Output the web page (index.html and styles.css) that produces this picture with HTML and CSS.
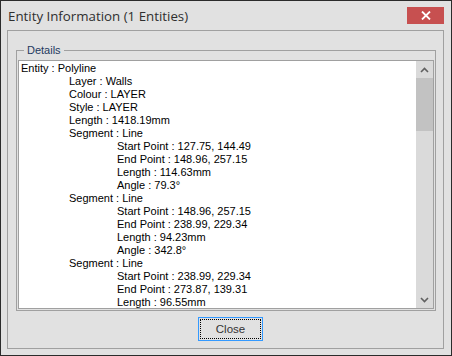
FILE: index.html
```html
<!DOCTYPE html>
<html>
<head>
<meta charset="utf-8">
<link rel="stylesheet" href="styles.css">
</head>
<body>
<div class="window">
  <div class="titlebar">
    <span class="title">Entity Information (1 Entities)</span>
    <span class="close-x">
      <svg width="10" height="9" viewBox="0 0 10 9"><path d="M1 0.5 L9 8.5 M9 0.5 L1 8.5" stroke="#ffffff" stroke-width="1.8" fill="none"/></svg>
    </span>
  </div>
  <div class="panel">
    <div class="group">
      <span class="legend">Details</span>
      <div class="listbox">
        <div class="list">
          <div class="l0">Entity : Polyline</div>
          <div class="l1">Layer : Walls</div>
          <div class="l1">Colour : LAYER</div>
          <div class="l1">Style : LAYER</div>
          <div class="l1">Length : 1418.19mm</div>
          <div class="l1">Segment : Line</div>
          <div class="l2">Start Point : 127.75, 144.49</div>
          <div class="l2">End Point : 148.96, 257.15</div>
          <div class="l2">Length : 114.63mm</div>
          <div class="l2">Angle : 79.3°</div>
          <div class="l1">Segment : Line</div>
          <div class="l2">Start Point : 148.96, 257.15</div>
          <div class="l2">End Point : 238.99, 229.34</div>
          <div class="l2">Length : 94.23mm</div>
          <div class="l2">Angle : 342.8°</div>
          <div class="l1">Segment : Line</div>
          <div class="l2">Start Point : 238.99, 229.34</div>
          <div class="l2">End Point : 273.87, 139.31</div>
          <div class="l2">Length : 96.55mm</div>
        </div>
        <div class="scrollbar">
          <div class="arrow">
            <svg width="9" height="6" viewBox="0 0 9 6"><path d="M1 5 L4.5 1.5 L8 5" stroke="#606060" stroke-width="1.6" fill="none"/></svg>
          </div>
          <div class="thumb"></div>
          <div class="track"></div>
          <div class="arrow">
            <svg width="9" height="6" viewBox="0 0 9 6"><path d="M1 1 L4.5 4.5 L8 1" stroke="#606060" stroke-width="1.6" fill="none"/></svg>
          </div>
        </div>
      </div>
    </div>
    <div class="buttons">
      <button class="btn">Close</button>
    </div>
  </div>
</div>
</body>
</html>
```

FILE: styles.css
```css
html, body {
  margin: 0;
  padding: 0;
  background: #e1e1e1;
}
.window {
  width: 452px;
  height: 356px;
  box-sizing: border-box;
  border: 1px solid #2b2b2b;
  background: #e1e1e1;
  display: flex;
  flex-direction: column;
}
.titlebar {
  height: 29px;
  display: flex;
  align-items: flex-start;
  justify-content: space-between;
}
.title {
  font-family: "Open Sans", "Noto Sans", sans-serif;
  font-size: 13.3px;
  color: #2f2f2f;
  margin-left: 7px;
  margin-top: 6px;
  line-height: 18px;
}
.close-x {
  width: 37px;
  height: 17px;
  margin-top: 6px;
  margin-right: 7px;
  background: #c75050;
  display: flex;
  align-items: center;
  justify-content: center;
}
.panel {
  margin-left: 6px;
  width: 437px;
  height: 319px;
  box-sizing: border-box;
  border: 1px solid #a0a0a0;
  display: flex;
  flex-direction: column;
}
.group {
  position: relative;
  margin-left: 8px;
  margin-top: 19px;
  width: 420px;
  height: 261px;
  box-sizing: border-box;
  border: 1px solid #a0a0a0;
}
.legend {
  position: absolute;
  left: 7px;
  top: -9px;
  padding: 0 3px;
  background: #e1e1e1;
  font-family: "Liberation Sans", Arial, sans-serif;
  font-size: 11px;
  line-height: 16px;
  color: #1f3a60;
}
.listbox {
  margin-left: 1px;
  margin-top: 9px;
  width: 416px;
  height: 249px;
  box-sizing: border-box;
  border: 1px solid #a0a0a0;
  background: #ffffff;
  display: flex;
}
.list {
  flex: 1;
  padding-left: 2px;
  padding-top: 1px;
  overflow: hidden;
  font-family: "Liberation Sans", Arial, sans-serif;
  font-size: 11px;
  line-height: 13px;
  color: #000000;
  white-space: nowrap;
}
.l1 { padding-left: 48px; }
.l2 { padding-left: 96px; }
.scrollbar {
  width: 17px;
  background: #dadada;
  display: flex;
  flex-direction: column;
}
.arrow {
  height: 17px;
  display: flex;
  align-items: center;
  justify-content: center;
}
.thumb {
  height: 53px;
  background: #c2c2c2;
}
.track {
  flex: 1;
}
.buttons {
  display: flex;
  justify-content: flex-start;
  padding-left: 190px;
  margin-top: 6px;
}
.btn {
  width: 65px;
  height: 24px;
  box-sizing: border-box;
  border: 1px solid #3399ff;
  background: #e1e1e1;
  outline: 1px dotted #000000;
  outline-offset: -3px;
  font-family: "Liberation Sans", Arial, sans-serif;
  font-size: 11.5px;
  color: #333333;
  padding: 0;
  margin: 0;
}
```
